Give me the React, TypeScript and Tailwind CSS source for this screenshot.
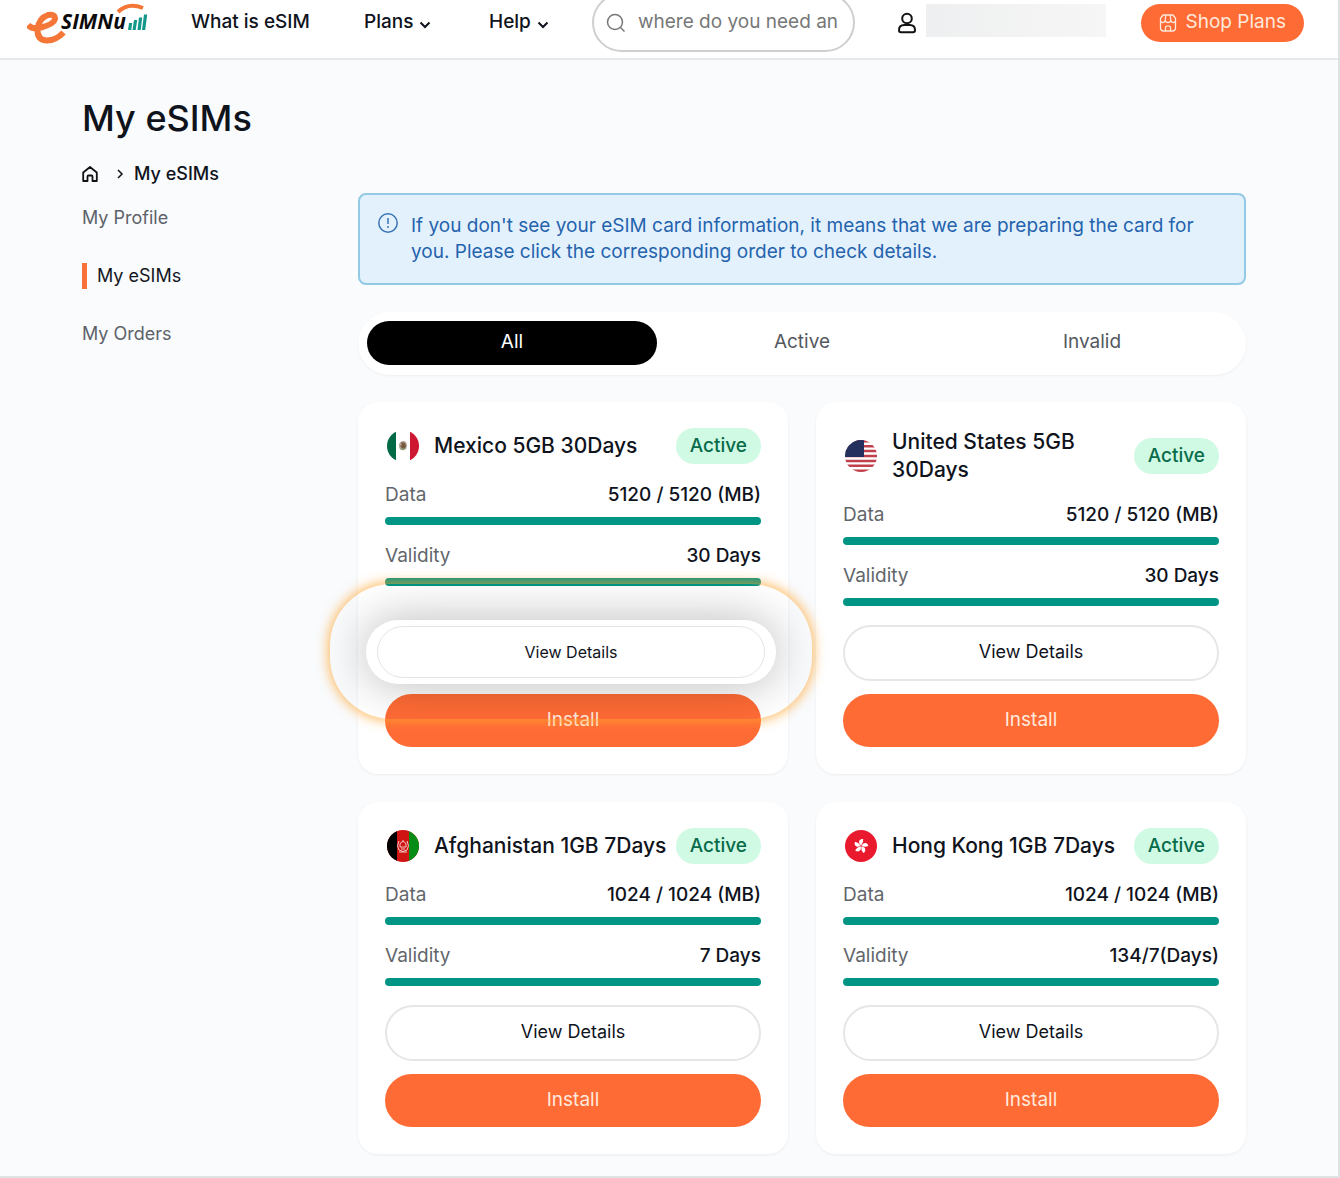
import type { ReactNode } from "react";

type Esim = {
  name: string;
  flag: ReactNode;
  data: string;
  validity: string;
  highlighted?: boolean;
};

function Logo() {
  return (
    <svg viewBox="0 0 122 44" className="h-11 w-[122px]" role="img" aria-label="eSIMNu">
      <path
        d="M1 24 Q6 29 14 26.500 Q27 23 28 18 Q28 12.500 21 14 Q12 17 10.500 28 Q10 39 20 39.500 Q29 39.500 36.500 31.500"
        fill="none"
        stroke="#f47738"
        strokeWidth="6"
      />
      <text
        x="34"
        y="28"
        fontFamily="Open Sans, Noto Sans, sans-serif"
        fontSize="21"
        fontWeight="700"
        fontStyle="italic"
        fill="#0b0b0b"
      >
        SIMNu
      </text>
      <path d="M91 11 Q101 1 116 7" fill="none" stroke="#f47738" strokeWidth="4" />
      <path
        d="M101 29l1-7h3.200l-1 7zM105.500 29l1.500-10h3.200l-1.500 10zM110.500 29l1.500-12.500h3.200l-1.500 12.500zM115 29l2-15.500h3.200l-2 15.500z"
        fill="#12978a"
      />
    </svg>
  );
}

function ChevronDown() {
  return (
    <svg viewBox="0 0 12 12" className="mt-1 size-3" fill="none" stroke="currentColor" strokeWidth="2">
      <path d="M1.500 3.500 6 8l4.500-4.500" />
    </svg>
  );
}

function SearchIcon() {
  return (
    <svg viewBox="0 0 20 20" className="size-5 shrink-0 text-[#777]" fill="none" stroke="currentColor" strokeWidth="1.500">
      <circle cx="9" cy="9" r="7.500" />
      <path d="m14.500 14.500 4 4" />
    </svg>
  );
}

function UserIcon() {
  return (
    <svg viewBox="0 0 20 22" className="h-[22px] w-5" fill="none" stroke="#111" strokeWidth="2">
      <circle cx="10" cy="6.500" r="4.800" />
      <path d="M2 18.200c0-3.600 2.500-5.200 5.200-5.200h5.600c2.700 0 5.200 1.600 5.200 5.200 0 1.200-.8 2-2 2H4c-1.200 0-2-.8-2-2z" />
    </svg>
  );
}

function ShopIcon() {
  return (
    <svg viewBox="0 0 18 18" className="size-[18px]" fill="none" stroke="currentColor" strokeWidth="1.300" strokeLinejoin="round">
      <path d="M4 1h10l2.500 3.500v2c0 1.300-1 2-2.200 2s-2.300-.7-2.500-2c-.2 1.300-1.400 2-2.800 2s-2.600-.7-2.800-2c-.2 1.300-1.300 2-2.500 2s-2.200-.7-2.200-2v-2z" />
      <path d="M1.500 7v7a3 3 0 0 0 3 3h9a3 3 0 0 0 3-3V7M6.800 1l-.6 5.500M11.200 1l.6 5.500M6.500 17v-3.500c0-.8.500-1.300 1.300-1.300h2.400c.8 0 1.300.5 1.300 1.300V17" />
    </svg>
  );
}

function HomeIcon() {
  return (
    <svg viewBox="0 0 16 16" className="size-4" fill="none" stroke="#111" strokeWidth="1.800" strokeLinejoin="round">
      <path d="M1.200 6.500 8 1l6.800 5.500V15h-4.300v-4.500a1 1 0 0 0-1-1h-3a1 1 0 0 0-1 1V15H1.200z" />
    </svg>
  );
}

function InfoIcon() {
  return (
    <svg viewBox="0 0 20 20" className="size-5 shrink-0" fill="none" stroke="#3b74b5" strokeWidth="1.500">
      <circle cx="10" cy="10" r="9.200" />
      <path d="M10 5v6M10 13v2" />
    </svg>
  );
}

function MexicoFlag() {
  return (
    <svg viewBox="0 0 32 32" className="size-8 rounded-full">
      <path d="M0 0h32v32H0z" fill="#fff" />
      <path d="M0 0h9v32H0z" fill="#046a45" />
      <path d="M23 0h9v32h-9z" fill="#ce1730" />
      <path d="M12 15q0-3 4-4 4 0 4 5-1 4-5 4-3-1-3-5z" fill="#b3a38f" />
      <path d="M14 12l4 1 1 4-3 2-3-3 2-1z" fill="#765a40" />
      <path d="M12.500 18q3 3.500 7 0" fill="none" stroke="#7f9a70" />
    </svg>
  );
}

function UsaFlag() {
  return (
    <svg viewBox="0 0 32 32" className="size-8 rounded-full">
      <path d="M0 0h32v32H0z" fill="#fff" />
      <path
        d="M0 1.250h32M0 6.200h32M0 11.100h32M0 16h32M0 20.900h32M0 25.800h32M0 30.700h32"
        stroke="#c0404c"
        strokeWidth="2.500"
      />
      <path d="M0 0h19v17H0z" fill="#25305f" />
    </svg>
  );
}

function AfghanistanFlag() {
  return (
    <svg viewBox="0 0 32 32" className="size-8 rounded-full">
      <path d="M0 0h32v32H0z" fill="#d01313" />
      <path d="M0 0h10v32H0z" fill="#000" />
      <path d="M22 0h10v32H22z" fill="#078c16" />
      <g fill="none" stroke="#f2c9c4">
        <path d="M12 11q-3 5 0 9 4 3 8 0 3-4 0-9" />
        <path d="M13 17v-3q3-5 6 0v3zM16 10v2M14 19h4M12 22h8" />
      </g>
    </svg>
  );
}

const PETALS = [0, 72, 144, 216, 288];

function HongKongFlag() {
  return (
    <svg viewBox="0 0 32 32" className="size-8 rounded-full">
      <path d="M0 0h32v32H0z" fill="#ea1a2e" />
      {PETALS.map((angle) => (
        <path key={angle} d="M16 15.500q-3.500-2-2-5 1.200-2 3.200-1.700 1 3.500-1.200 6.700z" fill="#fff" transform={`rotate(${angle + 8} 16 16)`} />
      ))}
    </svg>
  );
}

const ESIMS: Esim[] = [
  { name: "Mexico 5GB 30Days", flag: <MexicoFlag />, data: "5120 / 5120 (MB)", validity: "30 Days", highlighted: true },
  { name: "United States 5GB 30Days", flag: <UsaFlag />, data: "5120 / 5120 (MB)", validity: "30 Days" },
  { name: "Afghanistan 1GB 7Days", flag: <AfghanistanFlag />, data: "1024 / 1024 (MB)", validity: "7 Days" },
  { name: "Hong Kong 1GB 7Days", flag: <HongKongFlag />, data: "1024 / 1024 (MB)", validity: "134/7(Days)" },
];

function Header() {
  return (
    <header className="h-[60px] border-b-2 border-[#e6e9ea] bg-white">
      <nav className="flex h-[45px] items-center pr-[34px] pl-[27px] text-[19px] font-medium whitespace-nowrap">
        <a href="#home" className="w-[164px] shrink-0">
          <Logo />
        </a>
        <a href="#what" className="w-[173px] shrink-0">
          What is eSIM
        </a>
        <button className="flex w-[125px] shrink-0 items-center gap-[6px]">
          Plans <ChevronDown />
        </button>
        <button className="flex w-[103px] shrink-0 items-center gap-[6px]">
          Help <ChevronDown />
        </button>
        <label className="flex h-[59px] w-[263px] shrink-0 items-center gap-3 rounded-full border-2 border-[#cfcfcf] bg-white px-3">
          <SearchIcon />
          <input
            type="text"
            aria-label="Search destination"
            placeholder="where do you need an"
            className="w-full min-w-0 font-normal outline-none placeholder:text-[#777]"
          />
        </label>
        <a href="#account" aria-label="Account" className="ml-[42px] flex items-center gap-[9px]">
          <UserIcon />
          <span className="mb-1 h-[33px] w-[180px] bg-linear-to-r from-[#eeeff0] to-[#f6f6f6]" />
        </a>
        <button className="ml-auto flex h-[38px] items-center gap-[9px] rounded-full bg-[#ff6b35] px-[18px] font-normal text-[#ffe9dc]">
          <ShopIcon />
          Shop Plans
        </button>
      </nav>
    </header>
  );
}

function Sidebar() {
  return (
    <aside className="text-lg leading-[26px] text-[#5d6268]">
      <ul className="flex flex-col gap-8 pt-3">
        <li>
          <a href="#profile">My Profile</a>
        </li>
        <li>
          <a href="#esims" className="block border-l-[5px] border-[#f9703a] pl-[10px] text-[#14171f]">
            My eSIMs
          </a>
        </li>
        <li>
          <a href="#orders">My Orders</a>
        </li>
      </ul>
    </aside>
  );
}

function Meter({ label, value }: { label: string; value: string }) {
  return (
    <div>
      <div className="flex h-[53px] items-center justify-between pt-[9px]">
        <span className="text-[#62666b]">{label}</span>
        <span className="font-medium">{value}</span>
      </div>
      <div className="h-2 rounded-full bg-[#009485]" />
    </div>
  );
}

function HighlightedDetails() {
  return (
    <div className="relative h-14">
      <div className="absolute -top-[41px] -right-[51px] -bottom-[38px] -left-[55px] z-10 flex items-center justify-center overflow-hidden rounded-[62px] px-9 shadow-[0_0_12px_2px_rgba(255,165,50,0.75)]">
        <div className="h-16 w-full rounded-full bg-white px-[11px] py-[6px] shadow-[0_0_48px_2px_rgba(0,0,0,0.26)]">
          <button className="h-full w-full rounded-full border border-[#e4e4e4] text-base">View Details</button>
        </div>
      </div>
    </div>
  );
}

function EsimCard({ esim }: { esim: Esim }) {
  return (
    <article className="flex flex-col rounded-[20px] bg-white px-[27px] pt-[26px] pb-[27px] shadow-[0_1px_3px_rgba(0,0,0,0.06)]">
      <div className="flex items-center justify-between">
        <div className="flex items-center gap-[15px] pl-[2px]">
          <span className="shrink-0">{esim.flag}</span>
          <h2 className="text-[21px] leading-7 font-medium">{esim.name}</h2>
        </div>
        <span className="flex h-9 shrink-0 items-center rounded-full bg-[#d1fae5] px-[14px] font-medium text-[#086c4b]">
          Active
        </span>
      </div>
      <Meter label="Data" value={esim.data} />
      <Meter label="Validity" value={esim.validity} />
      <div className="mt-auto flex flex-col gap-[13px] pt-[19px]">
        {esim.highlighted ? (
          <HighlightedDetails />
        ) : (
          <button className="h-14 rounded-full border-2 border-[#e5e7e7] pb-[2px] text-lg">View Details</button>
        )}
        <button className="h-[53px] rounded-full bg-[#ff6b35] text-[#ffe9dc]">Install</button>
      </div>
    </article>
  );
}

export default function App() {
  return (
    <div className="min-h-screen border-r-2 border-b-2 border-[#dfe2e3] bg-[#f9fbfd] font-[Inter,sans-serif] text-[#0f131c]">
      <Header />
      <main className="pt-[31px] pr-[92px] pb-5 pl-[82px]">
        <h1 className="text-4xl leading-[54px] font-medium">My eSIMs</h1>
        <nav aria-label="Breadcrumb" className="mt-4 flex h-[26px] items-center text-lg font-medium">
          <a href="#home" aria-label="Home">
            <HomeIcon />
          </a>
          <svg viewBox="0 0 8 10" className="mr-[10px] ml-[18px] h-[10px] w-2" fill="none" stroke="#111" strokeWidth="1.500">
            <path d="m2 1 4 4-4 4" />
          </svg>
          <span>My eSIMs</span>
        </nav>
        <div className="mt-[6px] grid grid-cols-[276px_1fr]">
          <Sidebar />
          <section className="flex flex-col gap-[27px] text-[19px]">
            <div className="flex gap-[13px] rounded-lg border-2 border-[#93c9e4] bg-[#e3f1fd] p-[18px] leading-[26px] text-[#2563ad]">
              <InfoIcon />
              <p>
                If you don't see your eSIM card information, it means that we are preparing the card for you. Please
                click the corresponding order to check details.
              </p>
            </div>
            <div className="grid grid-cols-3 rounded-full bg-white p-[9px] pb-[10px] text-[#54585e] shadow-[0_1px_3px_rgba(0,0,0,0.05)]">
              <button className="h-11 rounded-full bg-black pb-[2px] text-white">All</button>
              <button className="h-11 rounded-full pb-[2px]">Active</button>
              <button className="h-11 rounded-full pb-[2px]">Invalid</button>
            </div>
            <div className="grid grid-cols-2 gap-7">
              {ESIMS.map((esim) => (
                <EsimCard key={esim.name} esim={esim} />
              ))}
            </div>
          </section>
        </div>
      </main>
    </div>
  );
}
